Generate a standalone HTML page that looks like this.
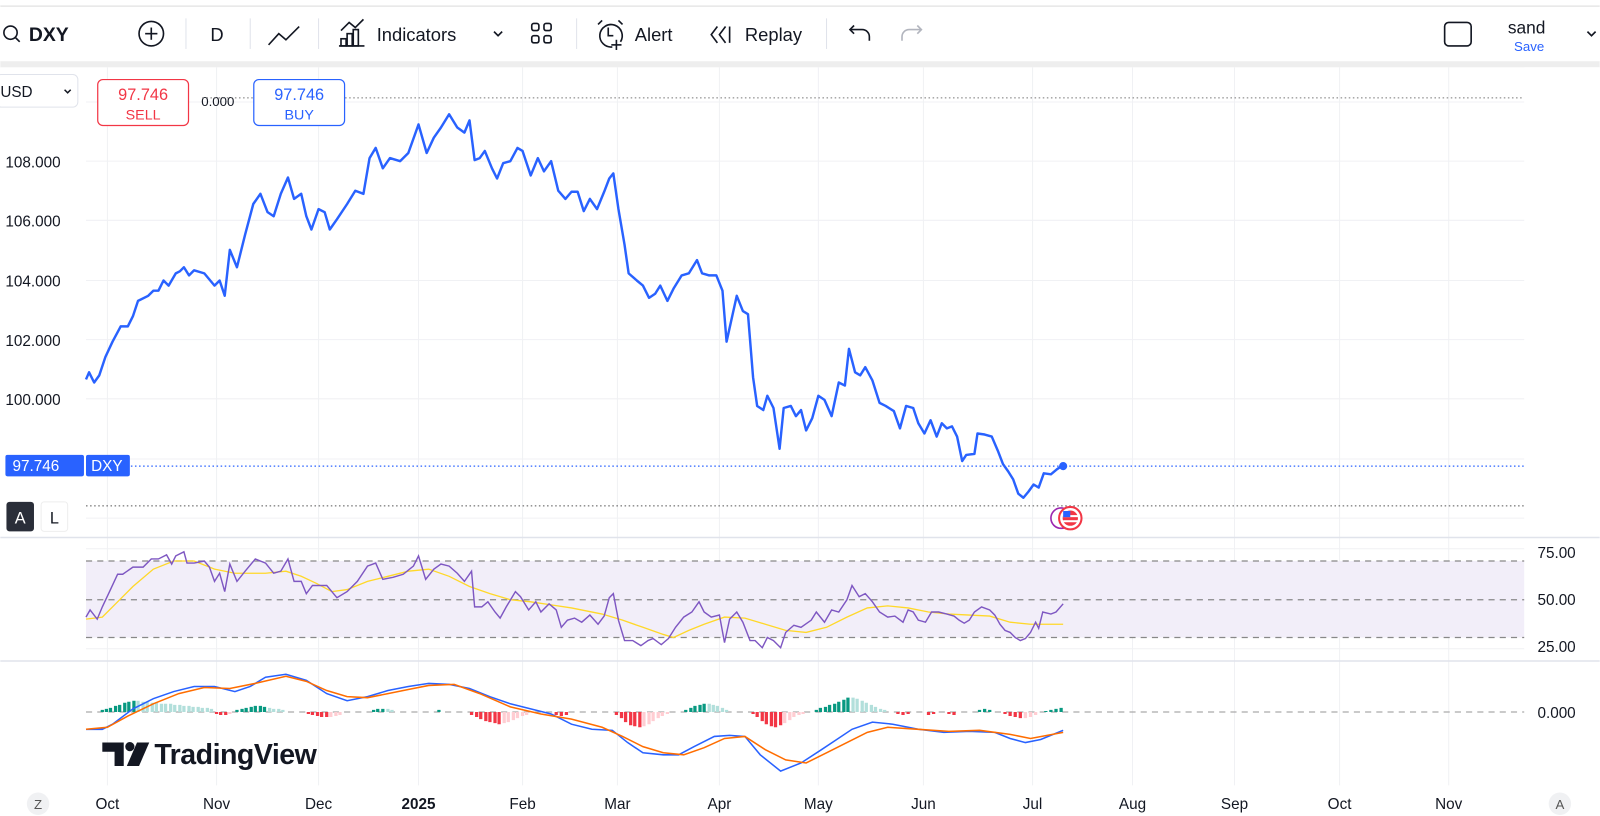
<!DOCTYPE html>
<html><head><meta charset="utf-8"><style>
html,body{margin:0;padding:0;background:#fff;width:1600px;height:816px;overflow:hidden}
svg{display:block}
text{font-family:"Liberation Sans",sans-serif}
</style></head><body>
<svg width="1600" height="816" viewBox="0 0 1568 800" xmlns="http://www.w3.org/2000/svg">
<rect width="1568" height="800" fill="#fff"/>
<!-- toolbar -->
<line x1="0" y1="6" x2="1568" y2="6" stroke="#e6e6e6" stroke-width="1.5"/>
<rect x="0" y="60" width="1568" height="6" fill="#eeeeee"/>
<g fill="none" stroke="#131722" stroke-width="1.6">
<circle cx="10" cy="32" r="6.5"/><line x1="15" y1="37" x2="19" y2="41"/>
<circle cx="148" cy="33" r="12"/><line x1="142" y1="33" x2="154" y2="33"/><line x1="148" y1="27" x2="148" y2="39"/>
<polyline points="263,44 273,33 280,39 293,26"/>
<polyline points="334,30 342,22 348,27 356,19"/>
<rect x="334" y="38" width="5" height="7"/><rect x="340" y="33" width="5" height="12"/><rect x="346" y="29" width="5" height="16"/><line x1="332" y1="45" x2="357" y2="45"/>
<polyline points="484,31 488,35 492,31"/>
<rect x="521" y="23" width="7" height="7" rx="2"/><rect x="533" y="23" width="7" height="7" rx="2"/><rect x="521" y="35" width="7" height="7" rx="2"/><rect x="533" y="35" width="7" height="7" rx="2"/>
<path d="M600 46 A11 11 0 1 1 608 41"/><polyline points="596,27 596,35 601,35"/><line x1="604" y1="39" x2="604" y2="49"/><line x1="599" y1="44" x2="609" y2="44"/><path d="M586 24 L590 20"/><path d="M606 20 L610 24"/>
<polyline points="703,26 697,34 703,42"/><polyline points="711,26 705,34 711,42"/><line x1="715" y1="26" x2="715" y2="42"/>
<path d="M837 33 L833 29 L837 25"/><path d="M834 29 H845 A7 7 0 0 1 852 36 V40"/>
<rect x="1416" y="22" width="26" height="23" rx="4"/>
<polyline points="1556,31 1560,35 1564,31"/>
</g>
<path d="M899 33 L903 29 L899 25 M902 29 H891 A7 7 0 0 0 884 36 V40" fill="none" stroke="#b2b5be" stroke-width="1.6"/>
<g stroke="#e0e3eb" stroke-width="1"><line x1="182" y1="18" x2="182" y2="48"/><line x1="245" y1="18" x2="245" y2="48"/><line x1="312" y1="18" x2="312" y2="48"/><line x1="565" y1="18" x2="565" y2="48"/><line x1="810" y1="18" x2="810" y2="48"/></g>
<text x="28" y="40" font-size="19" font-weight="bold" fill="#131722">DXY</text>
<text x="206" y="40" font-size="18" fill="#131722">D</text>
<text x="369" y="40" font-size="18" fill="#131722">Indicators</text>
<text x="622" y="40" font-size="18" fill="#131722">Alert</text>
<text x="730" y="40" font-size="18" fill="#131722">Replay</text>
<text x="1478" y="33" font-size="17" fill="#131722">sand</text>
<text x="1484" y="50" font-size="13" fill="#2962ff">Save</text>
<!-- grid verticals -->
<g stroke="#f0f1f4" stroke-width="1">
<line x1="105" y1="66" x2="105" y2="770"/><line x1="212" y1="66" x2="212" y2="770"/><line x1="312" y1="66" x2="312" y2="770"/><line x1="410" y1="66" x2="410" y2="770"/><line x1="512" y1="66" x2="512" y2="770"/><line x1="605" y1="66" x2="605" y2="770"/><line x1="705" y1="66" x2="705" y2="770"/><line x1="802" y1="66" x2="802" y2="770"/><line x1="905" y1="66" x2="905" y2="770"/><line x1="1012" y1="66" x2="1012" y2="770"/><line x1="1110" y1="66" x2="1110" y2="770"/><line x1="1210" y1="66" x2="1210" y2="770"/><line x1="1313" y1="66" x2="1313" y2="770"/><line x1="1420" y1="66" x2="1420" y2="770"/>
<line x1="84" y1="100" x2="1494" y2="100"/><line x1="84" y1="158" x2="1494" y2="158"/><line x1="84" y1="216" x2="1494" y2="216"/><line x1="84" y1="275" x2="1494" y2="275"/><line x1="84" y1="333" x2="1494" y2="333"/><line x1="84" y1="391" x2="1494" y2="391"/><line x1="84" y1="450" x2="1494" y2="450"/><line x1="84" y1="508" x2="1494" y2="508"/>
<line x1="84" y1="538" x2="1494" y2="538"/><line x1="84" y1="636" x2="1494" y2="636"/>
</g>
<line x1="0" y1="527" x2="1568" y2="527" stroke="#e0e3eb" stroke-width="1.5"/>
<line x1="0" y1="648" x2="1568" y2="648" stroke="#e0e3eb" stroke-width="1.5"/>
<rect x="1494" y="66" width="74" height="3" fill="#fff"/>
<!-- price labels -->
<g font-size="15" fill="#131722">
<text x="5" y="164">108.000</text><text x="5" y="222">106.000</text><text x="5" y="281">104.000</text><text x="5" y="339">102.000</text><text x="5" y="397">100.000</text>
<text x="1507" y="547">75.00</text><text x="1507" y="593">50.00</text><text x="1507" y="639">25.00</text><text x="1507" y="704">0.000</text>
</g>
<text x="197" y="104" font-size="13" fill="#131722">0.000</text>
<!-- dotted lines -->
<line x1="198" y1="96" x2="1494" y2="96" stroke="#777" stroke-width="1" stroke-dasharray="1.5,2.5"/>
<line x1="84" y1="496" x2="1494" y2="496" stroke="#555" stroke-width="1" stroke-dasharray="1.5,2.5"/>
<line x1="84" y1="457" x2="1494" y2="457" stroke="#2962ff" stroke-width="1.2" stroke-dasharray="1.5,2.5"/>
<!-- main line -->
<polyline fill="none" stroke="#2962ff" stroke-width="2.4" stroke-linejoin="round" points="84,372 87,365 92,375 97,368 103,350 110,335 118,320 125,320 130,310 135,295 145,290 150,285 155,285 160,275 165,280 172,268 176,266 180,262 185,270 190,265 200,268 210,280 215,275 220,290 225,245 232,262 240,230 248,200 255,190 262,208 268,212 275,190 282,174 288,195 295,190 300,212 305,225 312,205 318,208 323,225 330,215 340,200 348,187 356,190 362,155 368,145 375,165 382,155 392,158 400,150 410,122 418,150 425,135 432,125 440,112 448,125 455,130 460,118 465,157 470,155 475,148 482,165 487,175 493,160 500,158 507,145 512,148 520,172 527,155 533,168 540,158 547,187 554,195 560,188 566,188 572,207 578,195 585,205 592,188 597,175 601,170 606,205 612,240 616,268 624,275 630,280 636,292 642,288 647,280 654,295 660,283 668,270 675,268 683,255 688,268 695,270 702,270 708,285 712,335 718,308 722,290 728,305 733,308 738,370 742,398 748,402 752,388 758,400 764,440 768,400 775,398 780,408 785,402 790,422 796,410 802,388 808,392 815,408 822,375 828,378 832,342 838,365 843,368 848,360 855,373 862,395 868,398 876,403 882,420 888,398 895,400 900,415 906,425 912,412 918,428 923,415 928,420 933,418 938,428 943,452 947,446 955,445 958,425 965,426 972,428 978,442 983,455 988,462 993,470 998,484 1003,488 1008,482 1013,475 1018,478 1023,464 1030,465 1036,460 1042,456"/>
<circle cx="1042" cy="457" r="4" fill="#2962ff"/>
<!-- flag -->
<circle cx="1040" cy="508" r="10" fill="#fff" stroke="#9c27b0" stroke-width="1.6"/>
<circle cx="1049" cy="508" r="11" fill="#fff" stroke="#f23645" stroke-width="2"/>
<circle cx="1049" cy="508" r="7.5" fill="#f23645"/>
<rect x="1042" y="505" width="15" height="2" fill="#fff"/><rect x="1042" y="510" width="15" height="2" fill="#fff"/>
<rect x="1042" y="501" width="7" height="6" fill="#2962ff"/>
<!-- DXY label -->
<rect x="5" y="446" width="77" height="21" rx="2" fill="#2962ff"/>
<rect x="84" y="446" width="43" height="21" rx="2" fill="#2962ff"/>
<text x="12" y="462" font-size="15" fill="#fff">97.746</text>
<text x="89" y="462" font-size="15" fill="#fff">DXY</text>
<!-- USD/SELL/BUY -->
<rect x="-4" y="73" width="80" height="32" rx="5" fill="#fff" stroke="#e0e3eb"/>
<text x="0" y="95" font-size="15" fill="#131722">USD</text>
<polyline points="63,88 66,91 69,88" fill="none" stroke="#131722" stroke-width="1.5"/>
<rect x="95.5" y="78" width="89" height="45" rx="5" fill="#fff" stroke="#f23645" stroke-width="1.2"/>
<text x="140" y="98" font-size="16" fill="#f23645" text-anchor="middle">97.746</text>
<text x="140" y="117" font-size="14" fill="#f23645" text-anchor="middle">SELL</text>
<rect x="248.5" y="78" width="89" height="45" rx="5" fill="#fff" stroke="#2962ff" stroke-width="1.2"/>
<text x="293" y="98" font-size="16" fill="#2962ff" text-anchor="middle">97.746</text>
<text x="293" y="117" font-size="14" fill="#2962ff" text-anchor="middle">BUY</text>
<!-- A L -->
<rect x="6" y="492" width="27" height="29" rx="3" fill="#2a2e39"/>
<text x="19.5" y="513" font-size="16" fill="#fff" text-anchor="middle">A</text>
<rect x="40" y="492" width="26" height="29" rx="3" fill="#fff" stroke="#eee"/>
<text x="53" y="513" font-size="16" fill="#131722" text-anchor="middle">L</text>
<!-- RSI -->
<rect x="84" y="550" width="1410" height="75" fill="#f2eef9"/>
<g stroke="#888" stroke-width="1.2" stroke-dasharray="6,5"><line x1="84" y1="550" x2="1494" y2="550"/><line x1="84" y1="588" x2="1494" y2="588"/><line x1="84" y1="625" x2="1494" y2="625"/></g>
<polyline fill="none" stroke="#ffd829" stroke-width="1.3" points="84,607 100,605 115,590 130,575 150,558 170,550 190,550 210,558 230,562 260,562 280,560 295,565 310,572 325,580 340,578 360,570 380,565 400,560 420,558 440,565 460,575 480,582 500,588 520,590 540,593 560,596 590,602 610,608 630,615 650,622 660,625 675,618 690,612 710,605 730,606 750,612 770,618 790,620 810,615 830,605 850,596 870,594 890,596 910,600 930,602 950,603 970,604 990,610 1010,612 1042,612"/>
<polyline fill="none" stroke="#7e57c2" stroke-width="1.4" points="84,605 88,598 95,607 100,595 108,578 115,563 120,563 130,556 140,556 148,548 155,548 163,544 168,553 172,545 180,541 183,552 190,552 200,550 205,556 210,570 215,562 220,580 225,553 232,570 240,560 250,548 260,552 268,562 275,560 282,548 288,570 295,570 300,582 306,574 312,574 320,574 330,586 340,580 350,570 360,555 368,552 375,568 385,566 395,563 405,555 410,545 417,568 425,558 432,553 440,555 448,562 455,570 462,560 465,595 472,595 478,590 485,600 490,606 496,595 505,580 510,585 518,598 525,590 530,600 538,592 545,598 550,615 556,608 563,606 570,610 578,603 586,612 592,604 597,586 601,582 606,608 612,628 620,628 628,633 635,628 640,626 648,632 655,626 662,615 670,605 678,600 685,590 690,600 697,605 705,603 710,630 715,607 722,600 728,610 735,628 740,628 747,635 752,625 758,628 765,635 770,620 778,613 785,615 795,608 800,600 808,610 815,598 822,600 830,588 835,574 842,585 848,582 855,590 862,600 870,605 877,604 885,610 890,598 895,600 900,608 907,610 913,600 920,600 928,602 935,604 940,608 945,611 950,608 955,600 962,595 970,598 975,603 980,612 985,618 990,620 995,625 1000,628 1005,626 1010,620 1015,610 1018,616 1022,600 1030,602 1035,600 1042,592"/>
<!-- MACD -->
<line x1="84" y1="698" x2="1494" y2="698" stroke="#aaa" stroke-width="1.2" stroke-dasharray="6,5"/>
<g stroke-width="3.2">
<path stroke="#089981" d="M100 698v-2M104 698v-3M108 698v-4M113 698v-6M117 698v-7M122 698v-9M126 698v-10M131 698v-11M232 698v-2M237 698v-3M241 698v-4M246 698v-5M250 698v-6M255 698v-6M259 698v-5M366 698v-2M370 698v-3M375 698v-3M430 698v-2M672 698v-2M677 698v-4M681 698v-6M686 698v-7M690 698v-8M800 698v-2M804 698v-4M809 698v-5M813 698v-7M818 698v-8M822 698v-10M827 698v-12M831 698v-14M960 698v-2M965 698v-3M970 698v-2M1025 698v-1M1030 698v-2M1035 698v-3M1040 698v-4"/>
<path stroke="#b2dfdb" d="M135 698v-11M140 698v-10M144 698v-10M149 698v-9M153 698v-9M158 698v-8M162 698v-8M167 698v-8M171 698v-7M176 698v-7M180 698v-6M185 698v-6M189 698v-5M194 698v-5M198 698v-4M203 698v-4M207 698v-3M264 698v-4M268 698v-3M273 698v-3M277 698v-2M380 698v-3M384 698v-2M695 698v-8M699 698v-7M703 698v-6M708 698v-4M712 698v-2M836 698v-14M840 698v-13M845 698v-11M849 698v-9M854 698v-7M858 698v-5M863 698v-3M867 698v-2"/>
<path stroke="#f23645" d="M212 698v2M216 698v3M221 698v3M302 698v2M306 698v3M311 698v4M315 698v5M320 698v5M462 698v3M467 698v5M471 698v7M476 698v9M480 698v10M485 698v11M489 698v12M545 698v3M550 698v4M555 698v3M604 698v3M609 698v6M613 698v10M618 698v13M622 698v14M627 698v15M738 698v2M742 698v5M747 698v9M751 698v12M756 698v14M760 698v15M765 698v13M880 698v2M885 698v3M890 698v2M910 698v3M915 698v2M930 698v2M935 698v3M985 698v2M990 698v4M995 698v5M1000 698v6"/>
<path stroke="#ffcdd2" d="M225 698v2M324 698v5M329 698v4M333 698v3M494 698v11M498 698v10M503 698v8M507 698v6M512 698v4M516 698v3M631 698v14M636 698v12M640 698v9M645 698v6M649 698v4M654 698v2M769 698v11M774 698v8M778 698v5M783 698v3M787 698v2M1005 698v6M1010 698v5M1015 698v3"/>
</g>
<polyline fill="none" stroke="#2962ff" stroke-width="1.5" points="84,715 100,715 110,710 130,695 150,685 170,678 190,673 210,673 230,678 245,673 260,664 280,661 300,667 320,680 340,687 360,683 380,677 400,673 420,670 440,671 460,675 480,683 500,690 520,695 540,700 560,710 580,715 600,716 615,728 630,738 650,740 665,740 680,732 700,722 715,721 730,722 745,740 765,756 785,748 805,735 820,725 835,715 855,708 875,710 900,715 925,718 950,717 975,718 990,724 1005,728 1020,725 1042,716"/>
<polyline fill="none" stroke="#ff6d00" stroke-width="1.5" points="84,715 105,713 125,702 150,690 175,680 200,674 225,675 250,670 280,663 300,668 320,677 340,683 360,684 380,680 400,676 420,672 445,671 470,680 500,693 530,700 560,705 590,713 610,722 630,732 650,738 670,740 690,733 710,724 730,722 750,735 770,745 790,748 810,738 830,728 850,718 870,713 900,715 930,717 960,716 990,720 1010,724 1042,718"/>
<!-- TradingView logo -->
<g fill="#131722">
<path d="M100 728 H121 V751 H112 V737 H100 Z"/>
<circle cx="127" cy="732" r="4.5"/>
<path d="M134 728 H146 L136 751 H124 Z"/>
<text x="151" y="749" font-size="28" font-weight="bold" letter-spacing="-0.5">TradingView</text>
</g>
<!-- time axis -->
<circle cx="37" cy="788" r="11" fill="#f0f1f3"/>
<text x="37" y="793" font-size="13" fill="#555" text-anchor="middle">Z</text>
<circle cx="1529" cy="788" r="11" fill="#f0f1f3"/>
<text x="1529" y="793" font-size="13" fill="#555" text-anchor="middle">A</text>
<g font-size="15" fill="#131722" text-anchor="middle">
<text x="105" y="793">Oct</text><text x="212" y="793">Nov</text><text x="312" y="793">Dec</text><text x="410" y="793" font-weight="bold">2025</text><text x="512" y="793">Feb</text><text x="605" y="793">Mar</text><text x="705" y="793">Apr</text><text x="802" y="793">May</text><text x="905" y="793">Jun</text><text x="1012" y="793">Jul</text><text x="1110" y="793">Aug</text><text x="1210" y="793">Sep</text><text x="1313" y="793">Oct</text><text x="1420" y="793">Nov</text>
</g>
</svg>
</body></html>
